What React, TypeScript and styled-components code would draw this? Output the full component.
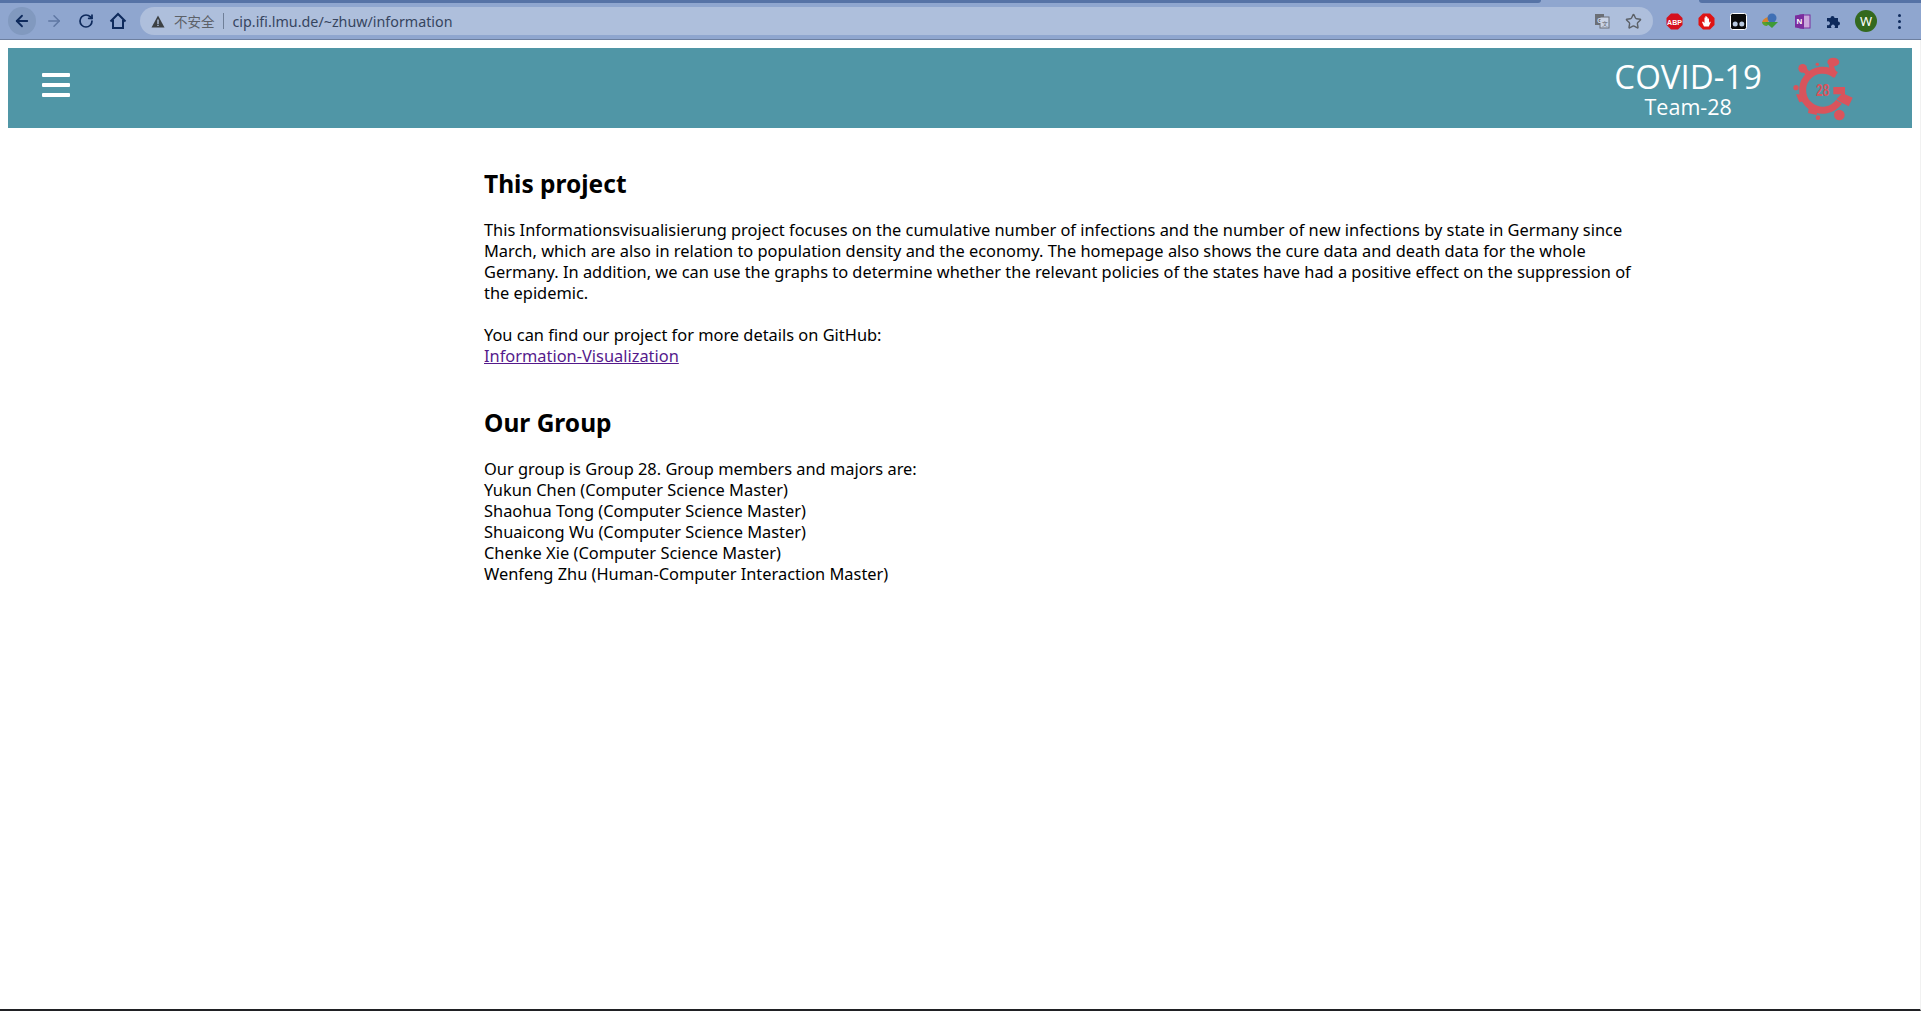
import React from 'react'
import styled, { createGlobalStyle } from 'styled-components'
import { ArrowLeft, ArrowRight, RotateCw, Star } from 'lucide-react'

const GlobalStyle = createGlobalStyle`
    html, body {
        margin: 0;
        padding: 0;
        background: #fff;
    }
`

const Page = styled.div`
    display: flex;
    flex-direction: column;
    height: 1011px;
    overflow: hidden;
    font-family: 'Noto Sans', sans-serif;
`

const Chrome = styled.div`
    height: 40px;
    flex-shrink: 0;
    box-sizing: border-box;
    background: #8fa6cf;
    border-bottom: 1px solid #6d7f9f;
    display: flex;
    flex-direction: column;
`

const TabStrip = styled.div`
    height: 3px;
    flex-shrink: 0;
    display: flex;
    justify-content: space-between;
`

const TabEdge = styled.div<{ $width: number; $side: 'left' | 'right' }>`
    width: ${(p) => p.$width}px;
    background: #5673a6;
    border-radius: ${(p) => (p.$side === 'left' ? '0 0 4px 0' : '0 0 0 4px')};
`

const Toolbar = styled.div`
    flex: 1;
    display: flex;
    align-items: center;
    padding: 0 8px;
`

const NavButton = styled.div<{ $active?: boolean; $disabled?: boolean }>`
    width: 28px;
    height: 28px;
    margin-right: 4px;
    flex-shrink: 0;
    border-radius: 50%;
    display: flex;
    align-items: center;
    justify-content: center;
    color: ${(p) => (p.$disabled ? '#5f77a3' : '#0e2a5c')};
    background: ${(p) => (p.$active ? '#8199bf' : 'transparent')};
`

const AddressBar = styled.div`
    flex: 1;
    height: 28px;
    margin: 0 5px 0 4px;
    border-radius: 14px;
    background: #aebfdc;
    display: flex;
    align-items: center;
    padding: 0 11px 0 11px;
    font-size: 14.300px;
    color: #36455f;
`

const Insecure = styled.span`
    font-family: 'Noto Sans CJK SC', sans-serif;
    font-size: 13.500px;
    color: #5c6168;
    margin-left: 9px;
    padding-right: 8px;
    border-right: 1px solid #6f7f98;
    line-height: 16px;
`

const Url = styled.span`
    margin-left: 9px;
    flex: 1;
`

const ExtIcon = styled.div`
    width: 32px;
    height: 28px;
    flex-shrink: 0;
    display: flex;
    align-items: center;
    justify-content: center;
`

const Avatar = styled.div`
    width: 22px;
    height: 22px;
    border-radius: 50%;
    background: #33691e;
    color: #fff;
    font-size: 13px;
    display: flex;
    align-items: center;
    justify-content: center;
`

const Dots = styled.div`
    display: flex;
    flex-direction: column;
    gap: 3px;
    width: 28px;
    margin-left: 3px;
    flex-shrink: 0;
    align-items: center;
    span {
        width: 3px;
        height: 3px;
        border-radius: 50%;
        background: #0e2a5c;
    }
`

const Viewport = styled.div`
    flex: 1;
    display: flex;
    flex-direction: column;
    padding: 8px 8px 0 8px;
    border-bottom: 2px solid #202124;
    border-right: 1px solid #f1f1f1;
`

const Header = styled.header`
    height: 80px;
    flex-shrink: 0;
    background: #5096a6;
    display: flex;
    align-items: center;
    padding: 0 42px 0 34px;
`

const Burger = styled.div`
    display: flex;
    flex-direction: column;
    gap: 6px;
    margin-top: -6px;
    span {
        display: block;
        width: 28px;
        height: 4px;
        border-radius: 1px;
        background: #fff;
    }
`

const Brand = styled.div`
    margin-left: auto;
    display: flex;
    flex-direction: column;
    align-items: center;
    color: #fff;
    font-family: 'Open Sans', sans-serif;
`

const BrandTitle = styled.div`
    font-size: 33px;
    line-height: 37px;
`

const BrandSub = styled.div`
    font-size: 21.500px;
    line-height: 24px;
`

const Logo = styled.svg`
    margin-left: 18px;
    flex-shrink: 0;
`

const Content = styled.main`
    width: 1160px;
    margin-left: 476px;
    color: #000;
    font-size: 16.400px;
    line-height: 21px;
`

const Heading = styled.h2<{ $first?: boolean }>`
    font-size: 24.500px;
    line-height: 36px;
    font-weight: 700;
    margin: ${(p) => (p.$first ? '38px' : '39px')} 0 17px;
`

const Para = styled.p`
    margin: 0 0 21px;
`

const Lines = styled.p`
    margin: 0;
`

const Link = styled.a`
    color: #551a8b;
    text-decoration: underline;
`

const HomeIcon = () => (
    <svg width="18" height="18" viewBox="0 0 18 18" fill="none" stroke="#0e2a5c" strokeWidth="2">
        <path d="M1.500 9.500 9 2l7.500 7.500M4 8v8h10V8" />
    </svg>
)

const WarningIcon = () => (
    <svg width="14" height="13" viewBox="0 0 14 13">
        <path d="M7 0.500 13.500 12.500H0.500z" fill="#3c4043" />
        <path d="M6.300 4.500h1.400v4.500H6.300zM6.300 9.800h1.400v1.300H6.300z" fill="#aebfdc" />
    </svg>
)

const TranslateIcon = () => (
    <svg width="16" height="16" viewBox="0 0 16 16" style={{ marginRight: 15 }}>
        <rect x="1" y="1" width="9" height="11" fill="#6b6f76" />
        <rect x="6" y="4" width="9" height="11" fill="#c9d3e6" stroke="#6b6f76" />
        <text x="5.500" y="9.500" fontSize="7" fontWeight="700" fill="#c9d3e6" textAnchor="middle">G</text>
        <text x="10.500" y="12.500" fontSize="6" fill="#5c6168" textAnchor="middle">文</text>
    </svg>
)

const AbpIcon = () => (
    <svg width="17" height="17" viewBox="0 0 17 17">
        <path d="M5 0.500h7L16.500 5v7L12 16.500H5L0.500 12V5z" fill="#d5101d" />
        <text x="8.500" y="11.500" fontSize="7" fontWeight="700" fill="#fff" textAnchor="middle" fontFamily="'Liberation Sans'">ABP</text>
    </svg>
)

const HandIcon = () => (
    <svg width="17" height="17" viewBox="0 0 17 17">
        <path d="M5 0.500h7L16.500 5v7L12 16.500H5L0.500 12V5z" fill="#e01313" />
        <path d="M6 13.500 4 9l1-.5L6.500 10V4.500h1V3h1v1h1v1.500h1.500V10l.8-1.500 1 .5-2 4.500z" fill="#fff" />
    </svg>
)

const GlassesIcon = () => (
    <svg width="17" height="17" viewBox="0 0 17 17">
        <rect x="0.500" y="0.500" width="16" height="16" rx="2" fill="#0a0a0a" stroke="#fff" />
        <circle cx="5.200" cy="11" r="2.500" fill="#b9c8de" />
        <circle cx="11.800" cy="11" r="2.500" fill="#b9c8de" />
    </svg>
)

const IdmIcon = () => (
    <svg width="18" height="16" viewBox="0 0 18 16">
        <path d="M1 9a8 7 0 0 1 9-5l-3 5z" fill="#d9822b" />
        <path d="M1 9c0 2 2 4 5 4l3-4z" fill="#5aa02c" />
        <circle cx="11" cy="5" r="4.500" fill="#3f6fb5" />
        <path d="M4 9h13l-6 6z" fill="#3e9a36" />
    </svg>
)

const OneNoteIcon = () => (
    <svg width="17" height="17" viewBox="0 0 17 17">
        <rect x="6" y="2" width="10" height="13" fill="#c9a6dc" stroke="#7b2d9e" />
        <path d="M1 2.500 10 1v15l-9-1.500z" fill="#7b2d9e" />
        <text x="5.500" y="11" fontSize="8" fontWeight="700" fill="#fff" textAnchor="middle" fontFamily="'Liberation Sans'">N</text>
    </svg>
)

const PuzzleIcon = () => (
    <svg width="16" height="16" viewBox="0 0 16 16">
        <path d="M1 5h3.500a2 2 0 1 1 4 0H12v3.500a2 2 0 1 1 0 4V15H8.500a2 2 0 1 0-3 0H1v-3a2 2 0 1 0 0-3.500z" fill="#0e2a5c" />
    </svg>
)

const VirusLogo = () => (
    <Logo width="90" height="75" viewBox="0 0 270 225">
        <g fill="#d9545c">
            <path d="M167 72A60 60 0 1 0 177 152" fill="none" stroke="#d9545c" strokeWidth="21" />
            <circle cx="68" cy="52" r="13" />
            <path d="M64 55 76 47 92 66 80 76z" />
            <ellipse cx="160" cy="33" rx="18" ry="13" />
            <path d="M146 40h14l10 28-6 12-14-10z" />
            <circle cx="112" cy="40" r="5" />
            <circle cx="48" cy="110" r="8" />
            <circle cx="114" cy="200" r="7" />
            <circle cx="178" cy="192" r="16" />
            <path d="M160 108h35v22l23 10-12 26-24-12-12-10 14-14h-24z" />
            <path d="M48 130h18l6 20-14 4zM86 174l26 6-2 12-26-6z" />
            <text x="128" y="135" fontSize="50" fontWeight="700" textAnchor="middle" fontFamily="'Liberation Sans'" textLength="40" lengthAdjust="spacingAndGlyphs">28</text>
        </g>
    </Logo>
)

export default function App() {
    return (
        <Page>
            <GlobalStyle />
            <Chrome>
                <TabStrip>
                    <TabEdge $side="left" $width={1541} />
                    <TabEdge $side="right" $width={222} />
                </TabStrip>
                <Toolbar>
                    <NavButton $active>
                        <ArrowLeft size={18} strokeWidth={2.4} />
                    </NavButton>
                    <NavButton $disabled>
                        <ArrowRight size={18} strokeWidth={2} />
                    </NavButton>
                    <NavButton>
                        <RotateCw size={16} strokeWidth={2.6} />
                    </NavButton>
                    <NavButton>
                        <HomeIcon />
                    </NavButton>
                    <AddressBar>
                        <WarningIcon />
                        <Insecure>不安全</Insecure>
                        <Url>cip.ifi.lmu.de/~zhuw/information</Url>
                        <TranslateIcon />
                        <Star size={17} color="#5c6168" />
                    </AddressBar>
                    <ExtIcon><AbpIcon /></ExtIcon>
                    <ExtIcon><HandIcon /></ExtIcon>
                    <ExtIcon><GlassesIcon /></ExtIcon>
                    <ExtIcon><IdmIcon /></ExtIcon>
                    <ExtIcon><OneNoteIcon /></ExtIcon>
                    <ExtIcon><PuzzleIcon /></ExtIcon>
                    <ExtIcon><Avatar>W</Avatar></ExtIcon>
                    <Dots><span /><span /><span /></Dots>
                </Toolbar>
            </Chrome>
            <Viewport>
                <Header>
                    <Burger><span /><span /><span /></Burger>
                    <Brand>
                        <BrandTitle>COVID-19</BrandTitle>
                        <BrandSub>Team-28</BrandSub>
                    </Brand>
                    <VirusLogo />
                </Header>
                <Content>
                    <Heading $first>This project</Heading>
                    <Para>
                        This Informationsvisualisierung project focuses on the cumulative number of infections and the number of new infections by state in Germany since March, which are also in relation to population density and the economy. The homepage also shows the cure data and death data for the whole Germany. In addition, we can use the graphs to determine whether the relevant policies of the states have had a positive effect on the suppression of the epidemic.
                    </Para>
                    <Lines>
                        You can find our project for more details on GitHub:
                        <br />
                        <Link href="#">Information-Visualization</Link>
                    </Lines>
                    <Heading>Our Group</Heading>
                    <Lines>
                        Our group is Group 28. Group members and majors are:
                        <br />
                        Yukun Chen (Computer Science Master)
                        <br />
                        Shaohua Tong (Computer Science Master)
                        <br />
                        Shuaicong Wu (Computer Science Master)
                        <br />
                        Chenke Xie (Computer Science Master)
                        <br />
                        Wenfeng Zhu (Human-Computer Interaction Master)
                    </Lines>
                </Content>
            </Viewport>
        </Page>
    )
}
